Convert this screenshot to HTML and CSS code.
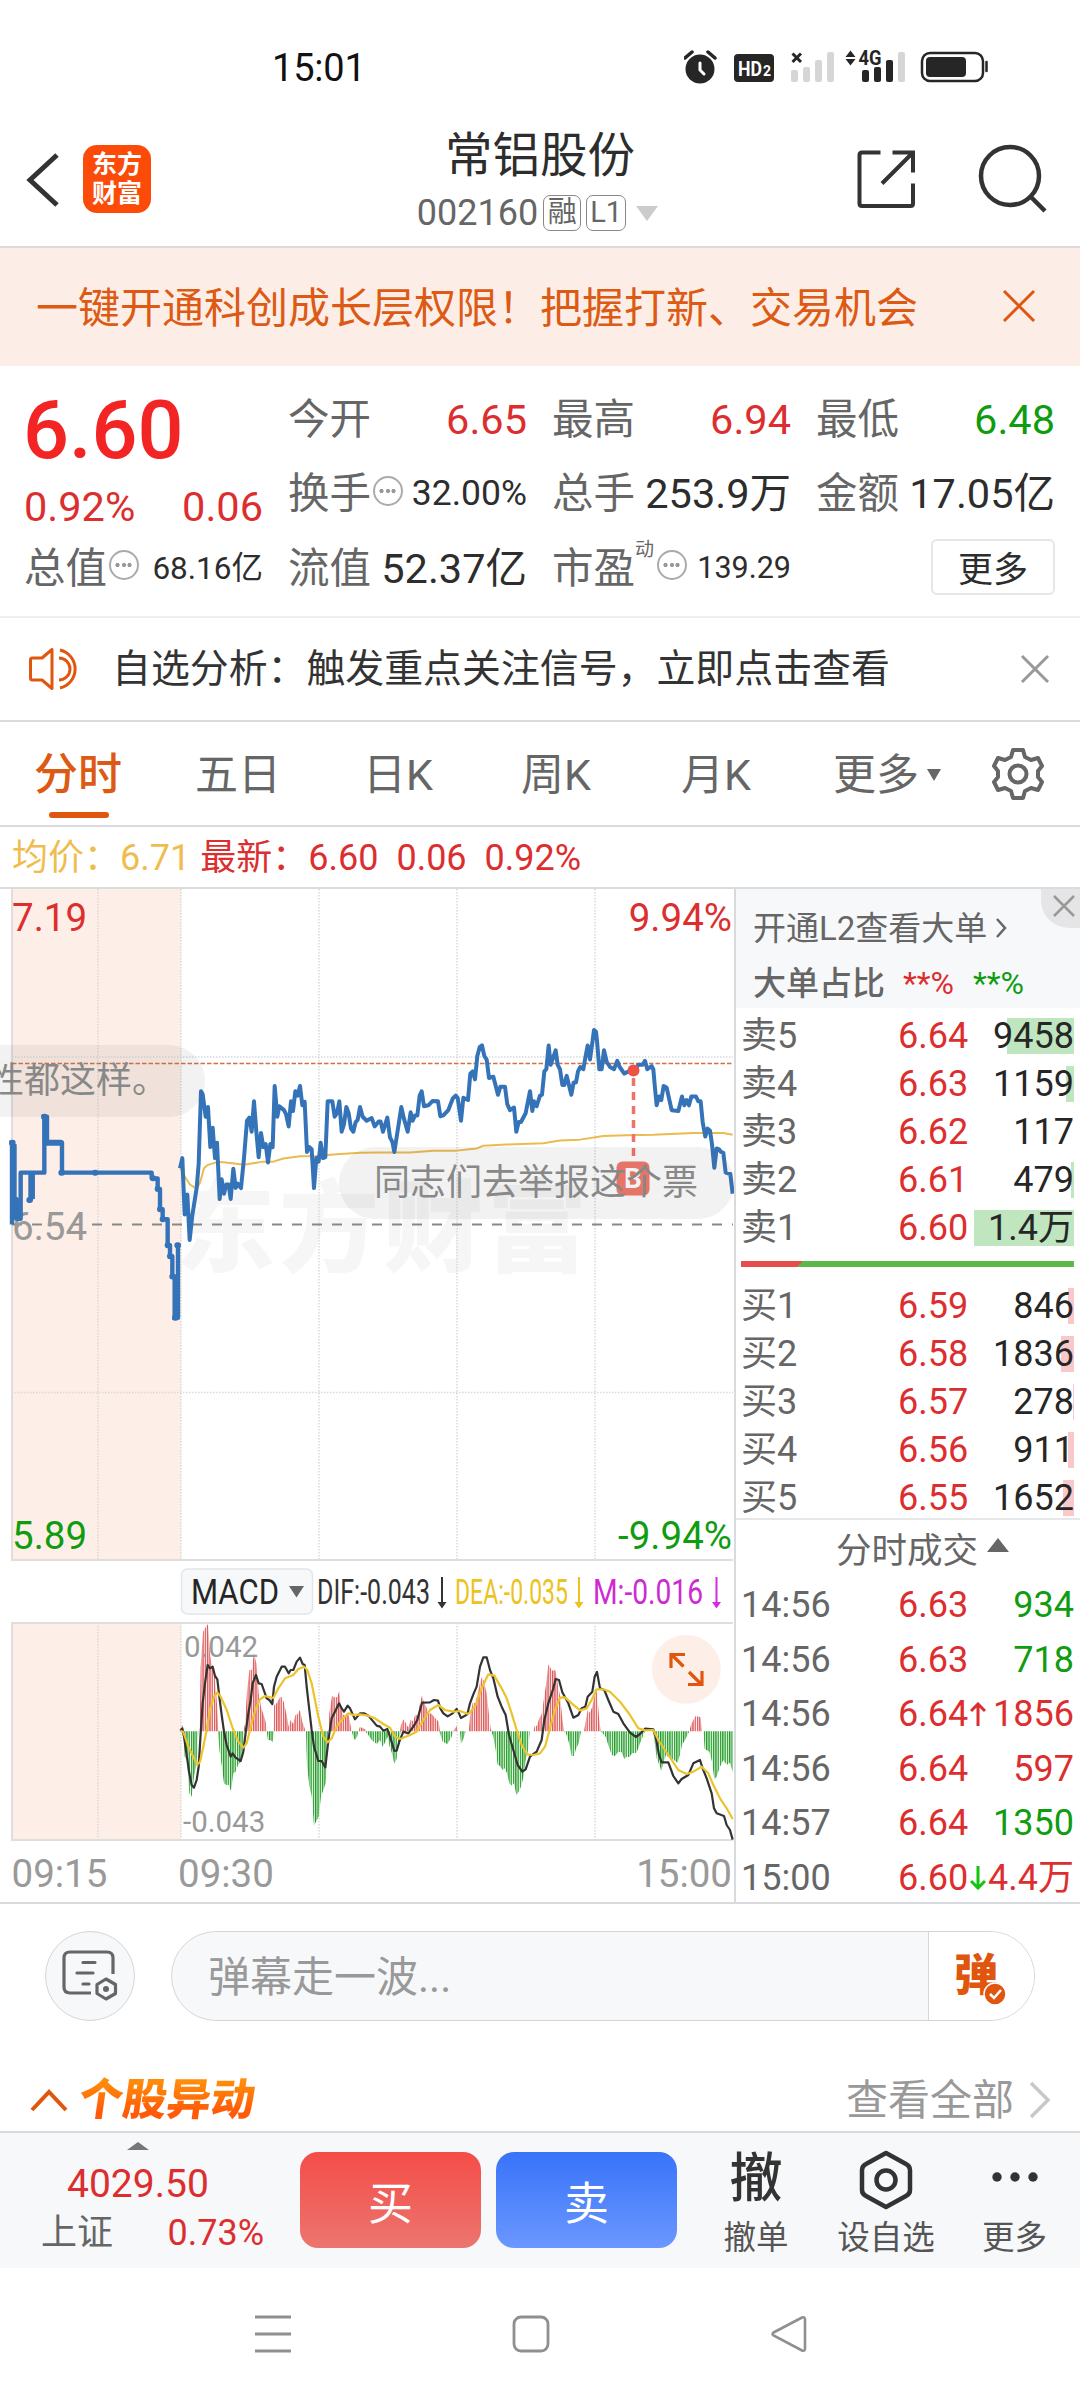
FILE: index.html
```html
<!DOCTYPE html>
<html lang="zh-CN">
<head>
<meta charset="utf-8">
<title>常铝股份 002160</title>
<link rel="stylesheet" href="styles.css">
</head>
<body>
<div class="status">
  <span class="clock">15:01</span>
  <svg class="status-icons" width="310" height="40" viewBox="684 48 310 40">
    <g fill="#262626">
      <circle cx="700" cy="69" r="14.5"/>
      <path d="M685 58l7-6M715 58l-7-6" stroke="#262626" stroke-width="3.5" stroke-linecap="round"/>
      <path d="M700 63v7l4 4" fill="none" stroke="#fff" stroke-width="3" stroke-linecap="round"/>
      <rect x="734" y="54" width="40" height="28" rx="4"/>
    </g>
    <text x="738" y="76" class="hd" textLength="24" lengthAdjust="spacingAndGlyphs">HD</text>
    <text x="763" y="76" class="hd-sub">2</text>
    <path d="M792.500 53.500l8.500 8.500M801 53.500l-8.500 8.500" stroke="#262626" stroke-width="3"/>
    <g fill="#d6d6d6"><rect x="791" y="70" width="7" height="12" rx="2"/><rect x="803" y="67" width="7" height="15" rx="2"/><rect x="815" y="60" width="7" height="22" rx="2"/><rect x="827" y="52" width="7" height="30" rx="2"/></g>
    <path d="M845.500 57l5-6.500 5 6.500zM845.500 59l5 6.500 5-6.500z" fill="#262626"/>
    <text x="858.500" y="65" class="net" textLength="23" lengthAdjust="spacingAndGlyphs">4G</text>
    <g fill="#262626"><rect x="862" y="70" width="7" height="12" rx="2"/><rect x="874" y="67" width="7" height="15" rx="2"/><rect x="886" y="60" width="7" height="22" rx="2"/></g>
    <rect x="898" y="52" width="7" height="30" rx="2" fill="#d6d6d6"/>
    <rect x="922" y="53" width="61" height="28" rx="8" fill="none" stroke="#262626" stroke-width="2.500"/>
    <rect x="926" y="57" width="40" height="20" rx="4" fill="#262626"/>
    <path d="M986.500 62v9" stroke="#262626" stroke-width="2.500" stroke-linecap="round"/>
  </svg>
</div>

<header class="header">
  <div class="head-left">
    <svg width="34" height="56" viewBox="0 0 34 56"><path d="M31 3L4 28l27 25" fill="none" stroke="#333" stroke-width="5"/></svg>
    <div class="brand"><span>东方</span><span>财富</span></div>
  </div>
  <div class="head-title">
    <h1>常铝股份</h1>
    <div class="code">002160<i class="tag">融</i><i class="tag tag-l">L1</i><b class="caret"></b></div>
  </div>
  <div class="head-right">
    <svg width="60" height="62" viewBox="0 0 60 62"><g fill="none" stroke="#333" stroke-width="4"><path d="M24.500 3.500H6q-2.500 0-2.500 2.500V54.500q0 2.500 2.500 2.500H54.500q2.500 0 2.500-2.500V34.500"/><path d="M36.500 3.500H57V23.500M56.500 4L26 34.500"/></g></svg>
    <svg width="70" height="70" viewBox="0 0 70 70"><g fill="none" stroke="#333" stroke-width="4.500"><circle cx="33" cy="32" r="29"/><path d="M54 53l14 14"/></g></svg>
  </div>
</header>

<div class="banner">
  <span>一键开通科创成长层权限！把握打新、交易机会</span>
  <svg width="34" height="34" viewBox="0 0 34 34"><path d="M2 2l30 30M32 2L2 32" stroke="#e0560f" stroke-width="3"/></svg>
</div>

<section class="quote">
  <div class="cell price">6.60</div>
  <div class="cell"><span>今开</span><b class="up">6.65</b></div>
  <div class="cell"><span>最高</span><b class="up">6.94</b></div>
  <div class="cell"><span>最低</span><b class="down">6.48</b></div>
  <div class="cell change"><b class="up">0.92%</b><b class="up">0.06</b></div>
  <div class="cell"><span>换手</span><i class="more-dot"></i><b class="s35">32.00%</b></div>
  <div class="cell"><span>总手</span><b>253.9万</b></div>
  <div class="cell"><span>金额</span><b>17.05亿</b></div>
  <div class="cell"><span>总值</span><i class="more-dot"></i><b class="s31">68.16亿</b></div>
  <div class="cell"><span>流值</span><b>52.37亿</b></div>
  <div class="cell"><span>市盈</span><sup>动</sup><i class="more-dot"></i><b class="s30">139.29</b></div>
  <div class="cell"><button class="more-btn">更多</button></div>
</section>

<div class="notice">
  <svg width="52" height="44" viewBox="0 0 52 44"><g fill="none" stroke="#e0560f" stroke-width="3"><path d="M23 2.500v39L13 33H3.500q-2 0-2-2V13q0-2 2-2H13z" stroke-linejoin="round"/><path d="M30 11a11 11 0 0 1 0 22M31 3a19.500 19.500 0 0 1 0 38"/></g></svg>
  <span>自选分析：触发重点关注信号，立即点击查看</span>
  <svg class="close" width="30" height="30" viewBox="0 0 30 30"><path d="M2 2l26 26M28 2L2 28" stroke="#999" stroke-width="3"/></svg>
</div>

<nav class="tabs">
  <span class="tab active">分时</span>
  <span class="tab">五日</span>
  <span class="tab">日K</span>
  <span class="tab">周K</span>
  <span class="tab">月K</span>
  <span class="tab">更多<b class="caret"></b></span>
  <svg width="52" height="54" viewBox="-26 -27 52 54"><g fill="none" stroke="#666" stroke-width="4" stroke-linejoin="round"><path d="M-5 -24H5L7 -17L13 -14L20 -16L24 -8L20 -3V3L24 8L20 16L13 14L7 17L5 24H-5L-7 17L-13 14L-20 16L-24 8L-20 3V-3L-24 -8L-20 -16L-13 -14L-7 -17Z"/><circle r="8.500"/></g></svg>
</nav>

<div class="info"><span class="avg">均价：6.71</span><span>最新：6.60</span><span>0.06</span><span>0.92%</span></div>

<main class="main">
  <div class="charts">
    <svg class="chart" width="734" height="1013" viewBox="0 889 734 1013">
      <defs>
        <pattern id="redBars" width="6.900" height="20" patternUnits="userSpaceOnUse"><rect width="6.900" height="20" fill="#fff"/><rect width="4.800" height="20" fill="#f08080"/><rect width="2.600" height="20" fill="#d65a5a"/></pattern>
        <pattern id="greenBars" width="6.900" height="20" patternUnits="userSpaceOnUse"><rect width="6.900" height="20" fill="#fff"/><rect width="4.800" height="20" fill="#5cc75c"/><rect width="2.600" height="20" fill="#2a9431"/></pattern>
      </defs>
      <rect x="12" y="889" width="169" height="671" fill="#fdeee7"/>
      <rect x="12" y="1623" width="169" height="217" fill="#fdeee7"/>
      <text class="watermark" x="175" y="1264" textLength="412">东方财富</text>
      <g stroke="#d9d9d9" stroke-width="1.500" stroke-dasharray="1.500 1.500">
        <path d="M98 889V1560M181 889V1560M319 889V1560M457 889V1560M595 889V1560M98 1623V1840M181 1623V1840M319 1623V1840M457 1623V1840M595 1623V1840M12 1057H733M12 1392.500H733"/>
      </g>
      <g fill="none" stroke="#dedede" stroke-width="2"><path d="M12 889V1560H733M733 1623H12V1840H733"/></g>
      <path d="M12 1063.500H733" stroke="#cf7440" stroke-width="1.500" stroke-dasharray="4.500 2"/>
      <path d="M12 1224.500H733" stroke="#888" stroke-width="2" stroke-dasharray="10 10"/>
      <text class="lbl mid" x="12" y="1239.500">6.54</text>
      <g class="line" transform="translate(0 880) scale(.33333 .44005)">
        <polyline stroke="#ecbb50" stroke-width="2" points="541,655 555,675 570,692 590,702 600,688 612,655 622,648 655,640 690,643 732,647 790,640 820,640 850,633 900,628 950,627 1010,623 1080,620 1140,619 1230,619 1300,615 1370,615 1430,610 1450,604 1520,601 1630,598 1680,592 1740,590 1810,582 1880,580 1960,579 2080,575 2170,575 2198,579"/>
        <path stroke="#3573b9" stroke-width="4.400" d="M28 597H44M36 597V783M43 600V725H49V770H62V665H133V538M92 665V727M98 665V725M82 727H95M124 538H141V597H186V665H455V678H473V702H480V748H488V771H503V830H510V855H517V901H524V995M517 995H534V830M526 830H540M36 600V780"/>
        <path stroke="#3573b9" stroke-width="6" stroke-linecap="round" d="M36 597H38M133 538H134M137 597H182M184 665H186M285 665H286M88 727H90M459 678H460M473 702H474M480 748H481M488 771H489M503 830H504M510 855H511M517 901H518M525 995H527M532 830H534M40 605V720M137 545V590M95 670V720M528 910V985"/>
        <polyline stroke="#3573b9" stroke-width="4" points="540,655 547,632 554,760 562,715 569,818 577,762 590,700 596,645 603,480 608,487 617,538 624,516 631,607 638,563 645,632 651,597 659,725 665,680 672,713 679,692 686,692 692,725 700,656 707,700 713,690 723,700 732,632 741,547 748,540 755,572 762,503 769,572 776,630 783,575 790,607 797,600 804,642 811,600 818,607 824,468 832,538 838,514 852,523 858,532 866,560 873,503 879,525 886,480 893,490 900,468 907,512 914,504 921,618 928,607 935,612 942,700 949,632 956,640 962,597 969,632 976,630 983,503 997,503 1004,538 1011,530 1018,503 1025,572 1032,555 1039,516 1046,530 1053,565 1060,572 1067,550 1073,545 1080,516 1088,538 1100,547 1115,541 1124,560 1136,549 1142,549 1149,572 1162,540 1170,585 1177,595 1183,618 1204,516 1211,540 1223,572 1232,528 1238,547 1245,535 1252,535 1259,490 1265,480 1272,514 1285,512 1298,502 1314,503 1321,537 1330,535 1345,523 1358,497 1367,490 1373,495 1383,547 1390,495 1404,500 1411,440 1418,435 1425,453 1432,400 1439,380 1446,376 1453,400 1460,408 1467,450 1480,447 1494,488 1501,470 1515,470 1522,510 1530,523 1542,517 1549,572 1556,550 1563,550 1577,530 1590,480 1597,525 1602,503 1610,514 1620,490 1626,488 1633,435 1639,430 1646,376 1652,420 1667,387 1673,420 1680,430 1687,466 1693,466 1700,445 1714,488 1721,460 1728,460 1734,435 1741,425 1750,430 1757,400 1763,376 1770,408 1777,370 1782,341 1788,345 1791,365 1798,430 1805,430 1812,387 1820,413 1830,425 1842,430 1852,411 1859,425 1873,440 1885,435 1900,437 1915,420 1928,420 1935,411 1942,430 1955,423 1960,430 1964,465 1970,512 1977,492 1984,500 1991,468 2000,472 2015,523 2035,525 2046,492 2053,512 2060,500 2067,512 2074,492 2088,492 2095,503 2102,503 2108,550 2116,583 2123,565 2130,570 2136,600 2143,654 2150,610 2157,612 2163,618 2170,620 2177,665 2191,668 2198,713"/>
      </g>
      <g>
        <circle cx="633.500" cy="1070.500" r="6" fill="#ea5345"/>
        <path d="M633.500 1078V1162" stroke="#ee7468" stroke-width="3.500" stroke-dasharray="8 6"/>
        <rect x="616.500" y="1161.500" width="33" height="34" rx="6" fill="#f2776b"/>
        <text class="buy-mark" x="633" y="1188" text-anchor="middle">B</text>
      </g>
      <text class="lbl up" x="12" y="931">7.19</text>
      <text class="lbl up" x="732" y="931" text-anchor="end">9.94%</text>
      <text class="lbl down" x="12" y="1549">5.89</text>
      <text class="lbl down" x="732" y="1549" text-anchor="end">-9.94%</text>

      <rect x="181.500" y="1569" width="131" height="45" rx="6" fill="#f7f8fa" stroke="#e3e5e8" stroke-width="1.500"/>
      <g class="ind">
        <text x="191" y="1604" fill="#262626" textLength="88" lengthAdjust="spacingAndGlyphs">MACD</text>
        <path d="M289 1586h15l-7.500 11.500z" fill="#666"/>
        <text x="317" y="1604" fill="#333" textLength="113" lengthAdjust="spacingAndGlyphs">DIF:-0.043</text>
        <text x="455" y="1604" fill="#edc21c" textLength="113" lengthAdjust="spacingAndGlyphs">DEA:-0.035</text>
        <text x="593" y="1604" fill="#cd2bd1" textLength="110" lengthAdjust="spacingAndGlyphs">M:-0.016</text>
        <path d="M441 1577h2v25h3.500l-4.500 6.500-4.500-6.500h3.500z" fill="#333"/>
        <path d="M578 1577h2v25h3.500l-4.500 6.500-4.500-6.500h3.500z" fill="#edc21c"/>
        <path d="M715.500 1577h2v25h3.500l-4.500 6.500-4.500-6.500h3.500z" fill="#d42be0"/>
      </g>
      <g transform="translate(0 1560) scale(.33333)">
        <path fill="url(#redBars)" d="M543,514 547,494 551,514ZM599,514 602,322 609,215 616,203 624,192 630,283 636,320 644,345 651,432 655,514ZM730,514 735,492 741,395 748,330 755,330 762,280 769,310 776,400 783,440 790,462 797,485 801,514ZM821,514 822,436 830,430 840,412 846,412 852,428 860,465 866,500 872,480 880,492 886,465 893,462 900,450 907,485 914,505 918,514ZM985,514 988,460 996,408 1006,413 1012,410 1018,393 1022,440 1030,465 1046,465 1052,498 1056,514ZM1075,514 1080,500 1095,508 1100,514ZM1200,514 1203,495 1210,478 1218,490 1225,503 1232,480 1240,483 1245,466 1253,466 1260,430 1266,406 1272,428 1279,442 1286,458 1295,462 1302,470 1316,485 1320,514ZM1360,514 1370,498 1374,514ZM1406,514 1411,465 1418,428 1425,430 1432,408 1439,372 1446,350 1452,365 1460,400 1466,455 1472,507 1476,514ZM1600,514 1604,498 1611,497 1618,475 1625,462 1632,415 1638,375 1645,313 1652,325 1658,332 1666,330 1673,370 1680,408 1687,475 1692,514ZM1752,514 1756,490 1763,450 1770,458 1777,440 1784,405 1791,393 1797,470 1802,514ZM2068,514 2073,495 2080,480 2087,468 2101,471 2106,514Z"/>
        <path fill="url(#greenBars)" d="M551,514 554,590 561,600 568,700 575,710 582,650 590,610 595,514ZM654,514 658,570 665,615 672,670 679,675 686,675 693,693 700,640 707,635 714,615 721,605 728,560 732,514ZM800,514 804,541 811,540 818,546 822,514ZM918,514 921,617 928,677 935,708 942,797 949,783 956,770 963,710 970,690 977,670 983,550 988,514ZM1055,514 1060,530 1065,541 1072,528 1076,514ZM1095,514 1105,525 1115,540 1130,552 1140,540 1148,560 1156,545 1162,530 1169,560 1176,580 1183,611 1190,597 1197,540 1202,514ZM1318,514 1328,545 1342,552 1355,530 1360,514ZM1380,514 1383,552 1390,537 1397,514ZM1474,514 1480,530 1487,570 1493,614 1500,618 1508,630 1514,625 1521,640 1528,670 1536,677 1542,670 1549,705 1556,695 1563,680 1570,652 1577,600 1585,567 1589,514ZM1692,514 1700,525 1708,552 1715,588 1722,588 1728,567 1736,550 1742,520 1746,514ZM1802,514 1817,530 1825,555 1835,585 1845,588 1855,575 1865,577 1873,597 1880,590 1888,592 1896,580 1910,578 1918,555 1928,530 1935,514ZM1960,514 1963,540 1970,595 1977,612 1984,632 1991,605 1998,585 2010,595 2022,600 2032,608 2040,585 2046,555 2055,540 2065,520 2070,514ZM2110,514 2114,567 2128,575 2136,605 2143,657 2150,650 2160,620 2170,600 2180,615 2190,608 2198,635 2198,514Z"/>
        <g class="line">
          <polyline stroke="#333" stroke-width="2.200" points="541,512 547,505 552,530 560,585 568,640 575,675 582,683 590,660 596,620 602,520 608,430 615,370 623,315 630,325 638,320 645,348 652,358 658,410 665,465 672,515 680,555 692,590 698,580 706,592 722,603 730,575 738,510 745,460 752,420 758,370 768,345 776,370 785,372 800,415 808,420 817,432 822,380 830,350 845,320 855,320 866,340 872,330 880,330 890,305 900,293 908,312 914,315 920,380 928,450 935,510 942,560 955,603 965,603 976,622 983,560 988,520 995,475 1005,455 1017,430 1025,445 1032,455 1043,437 1050,445 1065,478 1080,460 1092,460 1105,467 1120,485 1130,497 1140,500 1150,512 1162,507 1170,530 1183,573 1190,572 1198,545 1210,515 1225,520 1240,500 1252,480 1266,428 1290,427 1302,420 1314,422 1321,445 1330,460 1343,469 1358,460 1370,447 1377,460 1383,474 1402,463 1410,430 1420,403 1430,380 1440,320 1450,292 1460,292 1470,330 1480,355 1493,410 1505,440 1517,465 1527,525 1540,570 1553,615 1567,635 1577,628 1590,590 1610,575 1625,540 1633,480 1645,430 1660,385 1667,357 1677,360 1687,397 1705,430 1720,473 1735,465 1745,445 1756,440 1763,410 1777,395 1784,350 1791,336 1800,385 1813,390 1825,420 1840,455 1855,462 1870,490 1890,518 1908,531 1920,522 1935,506 1960,508 1967,530 1977,585 1985,607 2005,607 2020,648 2035,670 2045,657 2065,645 2080,610 2100,600 2108,625 2120,655 2135,700 2142,745 2150,760 2172,768 2180,795 2190,810 2198,839"/>
          <polyline stroke="#ecc32a" stroke-width="2.200" points="541,512 550,516 565,560 580,590 592,614 600,605 610,560 620,510 630,450 642,410 652,397 662,410 680,450 700,510 715,545 730,563 740,550 750,510 760,470 770,440 780,418 795,408 820,414 835,385 855,355 880,345 895,327 912,320 922,330 935,370 945,420 955,470 970,530 983,547 995,535 1010,500 1025,480 1045,460 1060,465 1080,463 1100,466 1125,475 1150,492 1170,503 1185,530 1200,537 1230,525 1250,515 1270,480 1290,450 1315,435 1335,450 1360,455 1380,453 1405,462 1425,440 1445,385 1465,343 1483,347 1505,385 1520,415 1535,460 1550,510 1565,555 1580,583 1600,585 1620,580 1635,560 1650,505 1665,450 1680,413 1695,412 1715,430 1740,451 1760,445 1775,420 1790,388 1810,388 1830,395 1860,425 1890,465 1915,505 1935,511 1960,510 1975,540 1995,570 2015,600 2035,630 2060,642 2080,635 2105,620 2125,640 2140,675 2160,715 2180,745 2198,777"/>
        </g>
      </g>
      <text class="small" x="184" y="1656.500">0.042</text>
      <text class="small" x="183" y="1832">-0.043</text>
      <circle cx="686.300" cy="1669.300" r="34.500" fill="#fdefe8"/>
      <path d="M671 1668v-13.500h14M672 1655l11.500 11.500M688 1684.500h14V1671M701 1684l-12-12" fill="none" stroke="#e0560f" stroke-width="3.200"/>
      <text class="axis" x="11.500" y="1887">09:15</text>
      <text class="axis" x="178" y="1887">09:30</text>
      <text class="axis" x="732" y="1887" text-anchor="end">15:00</text>
    </svg>
    <div class="bubble b1">性都这样。</div>
    <div class="bubble b2">同志们去举报这个票</div>
  </div>

  <aside class="side">
    <div class="l2">
      <div class="l2-open">开通L2查看大单<svg width="12" height="22" viewBox="0 0 12 22"><path d="M2 2l8 9-8 9" fill="none" stroke="#666" stroke-width="2.500"/></svg></div>
      <div class="l2-ratio"><b>大单占比</b><span class="up">**%</span><span class="down">**%</span></div>
      <div class="l2-close"><svg width="22" height="22" viewBox="0 0 22 22"><path d="M1 1l20 20M21 1L1 21" stroke="#999" stroke-width="2.500"/></svg></div>
    </div>
    <div class="book asks">
      <div class="row"><span>卖5</span><b class="up">6.64</b><em><i style="width:67px"></i>9458</em></div>
      <div class="row"><span>卖4</span><b class="up">6.63</b><em><i style="width:8px"></i>1159</em></div>
      <div class="row"><span>卖3</span><b class="up">6.62</b><em>117</em></div>
      <div class="row"><span>卖2</span><b class="up">6.61</b><em><i style="width:3px"></i>479</em></div>
      <div class="row"><span>卖1</span><b class="up">6.60</b><em><i style="width:100px"></i>1.4万</em></div>
    </div>
    <svg class="balance" width="333" height="6" viewBox="0 0 333 6"><path d="M0 0h333v6H0z" fill="#5eb849"/><path d="M0 0h62l-6 6H0z" fill="#e64c4c"/></svg>
    <div class="book bids">
      <div class="row"><span>买1</span><b class="up">6.59</b><em><i style="width:6px"></i>846</em></div>
      <div class="row"><span>买2</span><b class="up">6.58</b><em><i style="width:13px"></i>1836</em></div>
      <div class="row"><span>买3</span><b class="up">6.57</b><em><i style="width:1px"></i>278</em></div>
      <div class="row"><span>买4</span><b class="up">6.56</b><em><i style="width:6px"></i>911</em></div>
      <div class="row"><span>买5</span><b class="up">6.55</b><em><i style="width:11px"></i>1652</em></div>
    </div>
    <div class="ticks">
      <div class="ticks-title">分时成交<b></b></div>
      <div class="row"><span>14:56</span><b class="up">6.63</b><em class="down">934</em></div>
      <div class="row"><span>14:56</span><b class="up">6.63</b><em class="down">718</em></div>
      <div class="row"><span>14:56</span><b class="up">6.64</b><svg width="16" height="24" viewBox="0 0 16 24"><path d="M8 24V2M1 9l7-7 7 7" fill="none" stroke="#dc2e2e" stroke-width="3"/></svg><em class="up">1856</em></div>
      <div class="row"><span>14:56</span><b class="up">6.64</b><em class="up">597</em></div>
      <div class="row"><span>14:57</span><b class="up">6.64</b><em class="down">1350</em></div>
      <div class="row"><span>15:00</span><b class="up">6.60</b><svg width="16" height="24" viewBox="0 0 16 24"><path d="M8 0v22M1 15l7 7 7-7" fill="none" stroke="#10c410" stroke-width="3"/></svg><em class="up">4.4万</em></div>
    </div>
  </aside>
</main>

<div class="comment">
  <div class="round"><svg width="56" height="52" viewBox="0 0 56 52"><g fill="none" stroke="#666" stroke-width="3.200"><path d="M29 43H8q-6 0-6-6V8q0-6 6-6h37q6 0 6 6v16"/><path d="M21 12.500h12M15 23h16M21 34h6" stroke-linecap="round"/><path d="M44 29l9.500 5.500v9L44 49l-9-5.500v-9z" stroke-linejoin="round"/></g><circle cx="44" cy="39" r="3" fill="#666"/></svg></div>
  <div class="field"><span>弹幕走一波...</span>
    <div class="toggle">弹<svg width="24" height="24" viewBox="0 0 24 24"><circle cx="12" cy="12" r="11" fill="#e0560f" stroke="#fff" stroke-width="1.500"/><path d="M7 12l4 4 7-8" fill="none" stroke="#fff" stroke-width="2.500"/></svg></div>
  </div>
</div>

<div class="moves">
  <svg width="38" height="24" viewBox="0 0 38 24"><path d="M2 22L19 4l17 18" fill="none" stroke="#e0560f" stroke-width="4"/></svg>
  <h2>个股异动</h2>
  <span>查看全部</span>
  <svg width="22" height="38" viewBox="0 0 22 38"><path d="M2 2l17 17L2 36" fill="none" stroke="#c8c8c8" stroke-width="3.500"/></svg>
</div>

<div class="trade">
  <div class="index"><b class="caret-up"></b><div class="idx up">4029.50</div><div class="idx-row"><span>上证</span><span class="up">0.73%</span></div></div>
  <button class="buy">买</button>
  <button class="sell">卖</button>
  <div class="act a1"><strong>撤</strong><span>撤单</span></div>
  <div class="act a2"><div class="ico hex"><svg width="54" height="60" viewBox="0 0 54 60"><g fill="none" stroke="#333" stroke-width="4.500" stroke-linejoin="round"><path d="M27 3l20 11q4 2 4 6v20q0 4-4 6L27 57 7 46q-4-2-4-6V20q0-4 4-6z"/><circle cx="27" cy="30" r="9.500"/></g></svg></div><span>设自选</span></div>
  <div class="act a3"><div class="ico"><svg width="48" height="10" viewBox="0 0 48 10"><g fill="#333"><circle cx="6" cy="5" r="4.700"/><circle cx="24" cy="5" r="4.700"/><circle cx="42" cy="5" r="4.700"/></g></svg></div><span>更多</span></div>
</div>

<div class="sysnav">
  <svg width="38" height="38" viewBox="0 0 38 38"><path d="M1 2h36M1 19h36M1 36h36" stroke="#8f8f8f" stroke-width="2.800"/></svg>
  <svg width="38" height="38" viewBox="0 0 38 38"><rect x="2" y="2" width="34" height="34" rx="7" fill="none" stroke="#8f8f8f" stroke-width="2.800"/></svg>
  <svg width="38" height="38" viewBox="0 0 38 38"><path d="M3.500 17.500L32 2.500q3-1 3 2v29q0 3-3 2L3.500 20.500q-2-1.500 0-3z" fill="none" stroke="#8f8f8f" stroke-width="2.600"/></svg>
</div>
</body>
</html>
```
FILE: styles.css
```css
* { box-sizing: border-box; }
body {
  margin: 0;
  width: 1080px;
  height: 2400px;
  overflow: hidden;
  background: #fff;
  color: #333;
  font-family: Roboto, "Noto Sans CJK SC", sans-serif;
  line-height: 1;
}
svg { display: block; flex: none; }
b, i, em { font-weight: 400; font-style: normal; }
h1, h2 { margin: 0; font-weight: 400; }
button { border: 0; padding: 0; font-family: inherit; }
.up { color: #dc2e2e; fill: #dc2e2e; }
.down { color: #109c10; fill: #109c10; }

.status { display: flex; height: 100px; padding: 48px 86px 0 272px; justify-content: space-between; }
.clock { font-size: 38px; line-height: 41px; letter-spacing: -.2px; color: #111; }
.hd { font: 700 21px Roboto, sans-serif; fill: #fff; }
.hd-sub { font: 700 14px Roboto, sans-serif; fill: #fff; }
.net { font: 700 20px Roboto, sans-serif; fill: #262626; }

.header { display: flex; justify-content: space-between; height: 148px; border-bottom: 2px solid #dadbdd; padding: 0 34px 0 26px; }
.head-left { display: flex; gap: 23px; width: 200px; padding-top: 45px; align-items: flex-start; }
.head-left > svg { margin-top: 7px; }
.brand { width: 68px; height: 68px; border-radius: 14px; background: #fc4a08; color: #fff; display: flex; flex-direction: column; align-items: center; justify-content: center; font-size: 25px; font-weight: 700; line-height: 29px; }
.head-title { display: flex; flex-direction: column; align-items: center; padding-top: 31px; }
.head-title h1 { font-size: 47.500px; line-height: 50px; color: #2d2d2d; margin-left: -2px; }
.code { display: flex; align-items: center; height: 40px; margin-top: 12px; font-size: 36px; color: #666; margin-left: -7px; }
.tag { height: 36px; width: 38px; border: 1.500px solid #888; border-radius: 7px; font-size: 29px; line-height: 33px; text-align: center; margin-left: 5px; }
.tag-l { width: 40px; }
.caret { border: 11px solid transparent; border-top: 15px solid #ccc; border-bottom: 0; margin-left: 10px; }
.head-right { display: flex; gap: 61px; padding-top: 44px; align-items: flex-start; margin-right: -1px; }
.head-right svg:first-child { margin-top: 5px; }

.banner { height: 118px; background: #fceee6; color: #dc5a14; font-size: 42px; display: flex; align-items: center; justify-content: space-between; padding: 4px 44px 0 36px; }
.banner svg { margin-top: -6px; }

.quote { display: grid; grid-template-columns: repeat(4, 238px); grid-template-rows: repeat(3, 74.500px); column-gap: 26px; height: 252px; padding: 16px 25px 0; border-bottom: 2px solid #eee; font-size: 41.500px; }
.cell { display: flex; align-items: center; color: #666; margin-left: -1px; }
.cell b { margin-left: auto; color: #2d2d2d; }
.cell b.up { color: #dc2e2e; }
.cell b.down { color: #109c10; }
.cell.price { color: #f32424; font-size: 81px; font-weight: 500; padding-top: 23px; margin-left: -2px; }
.change { justify-content: space-between; padding-top: 25px; }
.change b:first-child { margin-left: 0; }
.cell .s35 { font-size: 35.500px; }
.cell .s31 { font-size: 31.500px; }
.cell .s30 { font-size: 30.500px; }
.cell sup { font-size: 19px; align-self: flex-start; margin-top: 9px; width: 20px; }
.more-dot { width: 30px; height: 30px; margin: -6px 0 0 2px; border: 2.500px solid #aaa; border-radius: 50%; background: radial-gradient(circle at 6.500px 50%, #999 1.800px, transparent 2.400px), radial-gradient(circle at 50% 50%, #999 1.800px, transparent 2.400px), radial-gradient(circle at 18.500px 50%, #999 1.800px, transparent 2.400px); }
.more-btn { margin-left: auto; width: 124px; height: 56px; margin-top: -3px; padding-bottom: 4px; border: 2px solid #e6e6e6; border-radius: 6px; background: #fff; font-size: 35px; color: #2d2d2d; }

.notice { height: 104px; border-bottom: 2px solid #dadbdd; display: flex; align-items: center; padding: 0 30px 0 29px; font-size: 38.900px; }
.notice span { margin-left: 31px; }
.notice .close { margin-left: auto; }

.tabs { height: 105px; border-bottom: 2px solid #dadbdd; display: grid; grid-template-columns: 161px 168px 158px 160px 152px 159px 52px; align-items: center; padding-left: 34px; font-size: 43px; color: #666; }
.tab { position: relative; line-height: 107px; height: 103px; }
.tab.active { color: #dc5a14; font-weight: 500; font-size: 44px; }
.tab.active::after { content: ""; position: absolute; left: 15px; bottom: 7px; width: 60px; height: 6px; border-radius: 3px; background: #e0560f; }
.tab .caret { display: inline-block; border-width: 12px 7.500px 0; border-top-color: #666; margin-left: 8px; vertical-align: 9px; }

.info { display: flex; height: 62px; border-bottom: 2px solid #dadbdd; align-items: center; padding: 2px 0 0 12px; font-size: 36px; color: #dc2e2e; gap: 18px; }
.info .avg { color: #efbd4f; margin-right: -8px; }

.main { display: flex; height: 1015px; border-bottom: 2px solid #d8dade; }
.charts { position: relative; width: 734px; overflow: hidden; }
.line { fill: none; stroke-linejoin: round; }
.line > * { vector-effect: non-scaling-stroke; }
.watermark { font: 900 100px "Noto Sans CJK SC", sans-serif; fill: #f6f6f6; }
.lbl { font-size: 38.500px; }
.mid { fill: #999; }
.small { font-size: 29.500px; fill: #999; }
.axis { font-size: 38.500px; fill: #999; }
.ind text { font-size: 35px; }
.buy-mark { font: 700 28px Roboto, sans-serif; fill: #fff; }
.bubble { position: absolute; height: 72px; line-height: 73px; border-radius: 36px; background: rgba(90, 90, 90, .08); color: #888; font-size: 36px; white-space: nowrap; }
.b1 { left: -48px; top: 156px; width: 253px; padding-left: 36px; }
.b2 { left: 339px; top: 258px; width: 395px; padding-left: 35px; }

.side { width: 346px; border-left: 2px solid #d8dade; font-size: 36px; }
.l2 { position: relative; height: 119px; background: #f7f8fa; padding: 14px 0 0 17px; color: #666; }
.l2-open { display: flex; align-items: center; gap: 8px; font-size: 33px; height: 50px; }
.l2-ratio { display: flex; align-items: center; height: 60px; font-size: 33px; }
.l2-ratio b { font-weight: 500; margin-right: 18px; }
.l2-ratio span { width: 70px; font-size: 32px; }
.l2-close { position: absolute; right: 0; top: 0; width: 39px; height: 39px; background: #e5e5e7; border-bottom-left-radius: 28px; padding: 6px 0 0 12px; }
.asks { padding-top: 4px; }
.row { display: flex; align-items: center; height: 48px; padding: 0 6px 0 5px; color: #666; }
.row span { width: 157px; }
.row b { width: 70px; }
.row em { position: relative; margin-left: auto; height: 36px; line-height: 36px; color: #262626; }
.row em.up { color: #dc2e2e; }
.row em.down { color: #109c10; }
.row em i { position: absolute; right: 0; top: 0; height: 36px; background: #bfe6bf; z-index: -1; }
.bids em i { background: #fac8c8; }
.balance { margin: 9px 0 15px 5px; }
.bids { height: 236px; }
.ticks { position: relative; border-top: 2px solid #e6e7e9; }
.ticks .row { height: 54.500px; }
.ticks svg { margin-left: 2px; }
.ticks-title { display: flex; align-items: center; height: 58px; padding: 5px 0 0 100px; font-size: 35.500px; color: #666; }
.ticks-title b { border: 11px solid transparent; border-bottom: 14px solid #666; border-top: 0; margin: -13px 0 0 9px; }

.comment { display: flex; gap: 36px; padding: 27px 45px 0; }
.round { width: 90px; height: 90px; border-radius: 50%; border: 1.500px solid #d3d6da; background: #f7f8fa; display: grid; place-items: center; }
.field { display: flex; align-items: center; justify-content: space-between; width: 864px; height: 90px; border: 1.500px solid #d3d6da; border-radius: 45px; background: #f7f8fa; overflow: hidden; padding-left: 36px; font-size: 42px; color: #999; }
.field > span { padding-top: 4px; }
.toggle { display: flex; align-items: center; height: 90px; width: 106px; background: #fff; border-left: 1.500px solid #d3d6da; padding-left: 25px; font-size: 44px; font-weight: 900; color: #e0560f; }
.toggle svg { margin: 35px 0 0 -15px; }

.moves { display: flex; align-items: center; height: 63px; margin-top: 47px; padding: 0 29px 0 30px; }
.moves h2 { margin-left: 11px; font-size: 44px; font-weight: 900; line-height: 60px; transform: skewX(-8deg); background: linear-gradient(#ff8c0a 20%, #ff5a08 70%); -webkit-background-clip: text; background-clip: text; color: transparent; }
.moves span { margin-left: auto; font-size: 42px; color: #999; margin-right: 15px; padding-top: 2px; }

.trade { display: flex; height: 137px; border-top: 2px solid #d8dade; background: #f7f8fa; }
.index { width: 300px; padding: 9px 37px 0 41px; color: #666; }
.caret-up { display: block; width: 0; margin-left: 86px; border: 11px solid transparent; border-bottom: 8px solid #777; border-top: 0; }
.idx { font-size: 39px; line-height: 48px; padding-left: 26px; margin-top: 10px; }
.idx-row { display: flex; justify-content: space-between; font-size: 36px; line-height: 50px; margin-right: -1px; }
.buy, .sell { width: 181px; height: 96px; margin: 19px 15px 0 0; border-radius: 18px; color: #fff; font-size: 45px; }
.buy { background: linear-gradient(#f44d48, #ec756f); }
.sell { background: linear-gradient(#3873f9, #6b97ff); }
.act { display: flex; flex-direction: column; align-items: center; font-size: 32.500px; color: #555; padding-top: 17px; }
.act strong { font-size: 53px; font-weight: 500; line-height: 58px; height: 54px; color: #333; }
.act span { line-height: 40px; margin-top: 14px; }
.ico { height: 54px; display: grid; place-items: center; }
.hex { align-items: end; padding-bottom: 1px; }
.a1 { width: 130px; margin-left: -1px; }
.a2 { width: 130px; }
.a3 { width: 127px; }

.sysnav { display: flex; height: 132px; gap: 220px; padding: 47px 0 0 254px; }
```
